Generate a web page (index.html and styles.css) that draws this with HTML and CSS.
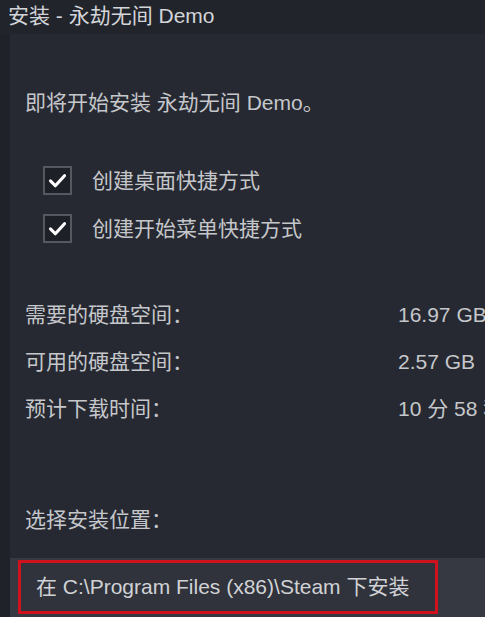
FILE: index.html
```html
<!DOCTYPE html>
<html lang="zh-CN">
<head>
  <meta charset="UTF-8">
  <title>安装 - 永劫无间 Demo</title>
  <link rel="stylesheet" href="styles.css">
</head>
<body>
  <div class="titlebar">安装 - 永劫无间 Demo</div>

  <div class="content">
    <p class="intro">即将开始安装 永劫无间 Demo。</p>

    <div class="options">
      <label class="option">
        <span class="box">
          <svg viewBox="0 0 24 24" width="21" height="21"><path d="M4 12.5 L9.5 18 L20 6.5" fill="none" stroke="#fff" stroke-width="3.6" stroke-linecap="round" stroke-linejoin="round"/></svg>
        </span>
        创建桌面快捷方式
      </label>
      <label class="option">
        <span class="box">
          <svg viewBox="0 0 24 24" width="21" height="21"><path d="M4 12.5 L9.5 18 L20 6.5" fill="none" stroke="#fff" stroke-width="3.6" stroke-linecap="round" stroke-linejoin="round"/></svg>
        </span>
        创建开始菜单快捷方式
      </label>
    </div>

    <div class="stats">
      <div class="row"><span class="key">需要的硬盘空间：</span><span class="val">16.97 GB</span></div>
      <div class="row"><span class="key">可用的硬盘空间：</span><span class="val">2.57 GB</span></div>
      <div class="row"><span class="key">预计下载时间：</span><span class="val">10 分 58 秒</span></div>
    </div>

    <p class="pick">选择安装位置：</p>

    <div class="dropdown">
      <div class="choice">在 C:\Program Files (x86)\Steam 下安装</div>
    </div>
  </div>
</body>
</html>
```

FILE: styles.css
```css
body {
  margin: 0;
  background-color: #1f2229;
  color: #c5c7cb;
  font-family: "Liberation Sans", "Noto Sans CJK SC", sans-serif;
  font-size: 21px;
  width: 485px;
  height: 617px;
  overflow: hidden;
}

.titlebar {
  height: 34px;
  line-height: 32px;
  padding-left: 8px;
  color: #d3d5d9;
  background-color: #21242b;
  white-space: nowrap;
}

.content {
  margin-left: 10px;
  height: 583px;
  background-color: #262931;
}

.intro {
  margin: 0;
  padding-top: 55px;
  padding-left: 15px;
  line-height: 28px;
  white-space: nowrap;
}

.options {
  margin-top: 49px;
  padding-left: 33px;
  display: flex;
  flex-direction: column;
  gap: 19px;
}

.option {
  display: flex;
  align-items: center;
  gap: 20px;
  line-height: 28px;
}

.box {
  width: 25px;
  height: 25px;
  border: 2px solid #55585f;
  background-color: #1d2026;
  display: flex;
  align-items: center;
  justify-content: center;
}

.stats {
  margin-top: 58px;
  padding-left: 15px;
}

.row {
  display: flex;
  line-height: 28px;
  height: 47px;
  white-space: nowrap;
}

.key {
  width: 373px;
  flex-shrink: 0;
}

.pick {
  margin: 0;
  margin-top: 64px;
  padding-left: 15px;
  line-height: 28px;
}

.dropdown {
  margin-top: 24px;
  height: 61px;
  background-color: #363941;
  padding-left: 8px;
  padding-top: 2px;
  box-sizing: border-box;
}

.choice {
  width: 420px;
  height: 54px;
  border: 3px solid #d0121f;
  box-sizing: border-box;
  background-color: #30333b;
  padding-left: 15px;
  line-height: 48px;
  color: #d0d2d6;
  white-space: nowrap;
}
```
